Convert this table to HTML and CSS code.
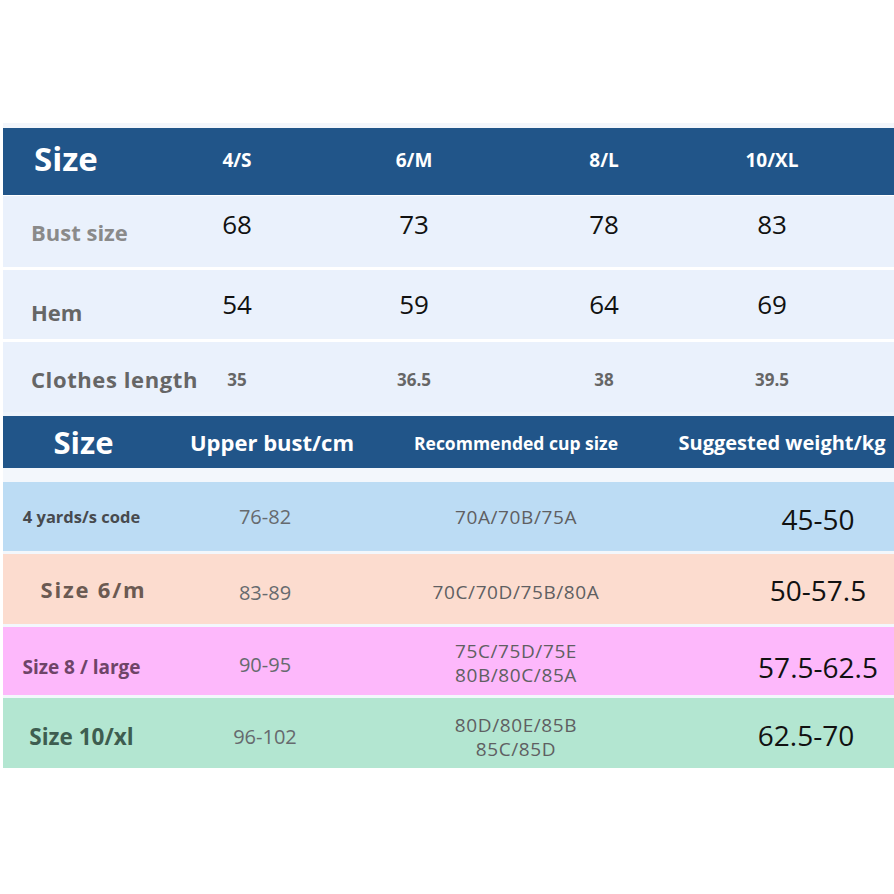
FILE: index.html
```html
<!DOCTYPE html>
<html lang="en">
<head>
<meta charset="utf-8">
<title>Size chart</title>
<link rel="stylesheet" href="styles.css">
</head>
<body>
<div class="chart">
  <section class="measure">
    <div class="mrow mrow--head">
      <div class="mlabel mlabel--head">Size</div>
      <div class="mval mval--head">4/S</div>
      <div class="mval mval--head">6/M</div>
      <div class="mval mval--head">8/L</div>
      <div class="mval mval--head">10/XL</div>
    </div>
    <div class="mrow mrow--bust">
      <div class="mlabel mlabel--light">Bust size</div>
      <div class="mval">68</div>
      <div class="mval">73</div>
      <div class="mval">78</div>
      <div class="mval">83</div>
    </div>
    <div class="mrow mrow--hem">
      <div class="mlabel">Hem</div>
      <div class="mval">54</div>
      <div class="mval">59</div>
      <div class="mval">64</div>
      <div class="mval">69</div>
    </div>
    <div class="mrow">
      <div class="mlabel mlabel--wide">Clothes length</div>
      <div class="mval mval--small">35</div>
      <div class="mval mval--small">36.5</div>
      <div class="mval mval--small">38</div>
      <div class="mval mval--small">39.5</div>
    </div>
  </section>
  <section class="fit">
    <div class="frow frow--head">
      <div class="fcell fhead fhead--size">Size</div>
      <div class="fcell fhead fhead--bust">Upper bust/cm</div>
      <div class="fcell fhead fhead--cup">Recommended cup size</div>
      <div class="fcell fhead fhead--weight">Suggested weight/kg</div>
    </div>
    <div class="fbody">
      <div class="frow frow--s">
        <div class="fcell flabel flabel--s">4 yards/s code</div>
        <div class="fcell fbust">76-82</div>
        <div class="fcell fcup">70A/70B/75A</div>
        <div class="fcell fweight">45-50</div>
      </div>
      <div class="frow frow--m">
        <div class="fcell flabel flabel--m">Size 6/m</div>
        <div class="fcell fbust">83-89</div>
        <div class="fcell fcup">70C/70D/75B/80A</div>
        <div class="fcell fweight">50-57.5</div>
      </div>
      <div class="frow frow--l">
        <div class="fcell flabel flabel--l">Size 8 / large</div>
        <div class="fcell fbust">90-95</div>
        <div class="fcell fcup">75C/75D/75E<br>80B/80C/85A</div>
        <div class="fcell fweight fweight--l">57.5-62.5</div>
      </div>
      <div class="frow frow--xl">
        <div class="fcell flabel flabel--xl">Size 10/xl</div>
        <div class="fcell fbust">96-102</div>
        <div class="fcell fcup">80D/80E/85B<br>85C/85D</div>
        <div class="fcell fweight fweight--xl">62.5-70</div>
      </div>
    </div>
  </section>
</div>
</body>
</html>
```
FILE: styles.css
```css
* { box-sizing: border-box; }

html, body {
  margin: 0;
  padding: 0;
  background: #ffffff;
}

body {
  font-family: "Open Sans", "Noto Sans", "DejaVu Sans", sans-serif;
  width: 894px;
  height: 894px;
  overflow: hidden;
}

.chart {
  margin: 123px 0 0 3px;
  width: 891px;
}

/* ---------- top measurement table ---------- */
.measure {
  display: flex;
  flex-direction: column;
  gap: 3px;
  border-top: 5px solid #f3f6fb;
  background: #ffffff;
}

.mrow {
  display: grid;
  grid-template-columns: 147px 174px 180px 200px 136px 1fr;
  align-items: center;
  height: 70px;
  background: #eaf1fc;
  white-space: nowrap;
}

.mrow--head {
  height: 67px;
  background: #215589;
  margin-bottom: -2px;
}

.mrow--bust { height: 71px; }
.mrow--hem { height: 69px; }

.mlabel {
  padding-left: 28px;
  font-weight: 700;
  font-size: 22px;
  color: #666666;
  padding-top: 6px;
}

.mlabel--wide { letter-spacing: 0.6px; padding-top: 4px; }
.mlabel--light { color: #8a8a8a; padding-top: 0; }
.mrow--hem .mlabel { padding-top: 14px; }

.mlabel--head {
  padding-left: 31px;
  padding-top: 0;
  padding-bottom: 6px;
  font-size: 33px;
  color: #ffffff;
}

.mval {
  text-align: center;
  font-size: 26px;
  color: #111111;
}

.mrow--bust .mval { padding-bottom: 16px; }
.mrow--hem .mval { padding-bottom: 2px; }

.mval--head {
  font-size: 19px;
  font-weight: 700;
  color: #ffffff;
  padding-bottom: 4px;
}

.mval--small {
  font-size: 17px;
  font-weight: 700;
  color: #666666;
  padding-top: 4px;
}

/* ---------- bottom fit table ---------- */
.fit {
  border-top: 4px solid #eef4fc;
}

.frow {
  display: grid;
  grid-template-columns: 157px 210px 292px 1fr;
  align-items: center;
  height: 70px;
  white-space: nowrap;
}

.fcell { text-align: center; }

.frow--head {
  height: 52px;
  background: #215589;
  color: #ffffff;
  font-weight: 700;
}

.fhead--size { font-size: 31px; padding-top: 0; padding-left: 4px; }
.fhead--bust { font-size: 22px; padding-left: 14px; }
.fhead--cup { font-size: 17.5px; padding-top: 2px; }
.fhead--weight { font-size: 20px; padding-left: 8px; }

.fbody {
  display: flex;
  flex-direction: column;
  gap: 3px;
  padding-top: 14px;
  background: #f3f7fc;
}

.frow--s { height: 69px; background: #bcdcf4; }
.frow--m { height: 70px; background: #fcdccf; }
.frow--l { height: 68px; background: #fdb8fb; }
.frow--xl { height: 70px; background: #b3e6d1; }

.flabel { font-weight: 700; }
.flabel--s { font-size: 16.5px; color: #474a4e; padding-top: 0; }
.flabel--m { font-size: 22px; color: #6b5a52; padding-left: 24px; letter-spacing: 1.8px; padding-top: 0; }
.flabel--l { font-size: 19px; color: #6e4468; padding-top: 12px; }
.flabel--xl { font-size: 22.5px; color: #3e5d50; padding-top: 6px; }

.fbust {
  font-size: 20px;
  color: #666a6e;
  padding-top: 0;
}

.frow--m .fbust { padding-top: 6px; }
.frow--l .fbust, .frow--xl .fbust { padding-top: 6px; }

.fcup {
  font-size: 19px;
  line-height: 24px;
  color: #5f5f62;
  letter-spacing: 0.6px;
  padding-top: 4px;
}

.frow--s .fcup { padding-top: 0; }
.frow--m .fcup { padding-top: 6px; }
.frow--xl .fcup { padding-top: 8px; }

.fweight {
  font-size: 28px;
  color: #111111;
  padding-left: 80px;
  padding-top: 4px;
}

.frow--m .fweight { padding-top: 2px; }
.fweight--l { padding-top: 12px; }
.fweight--xl { padding-left: 56px; }
```
